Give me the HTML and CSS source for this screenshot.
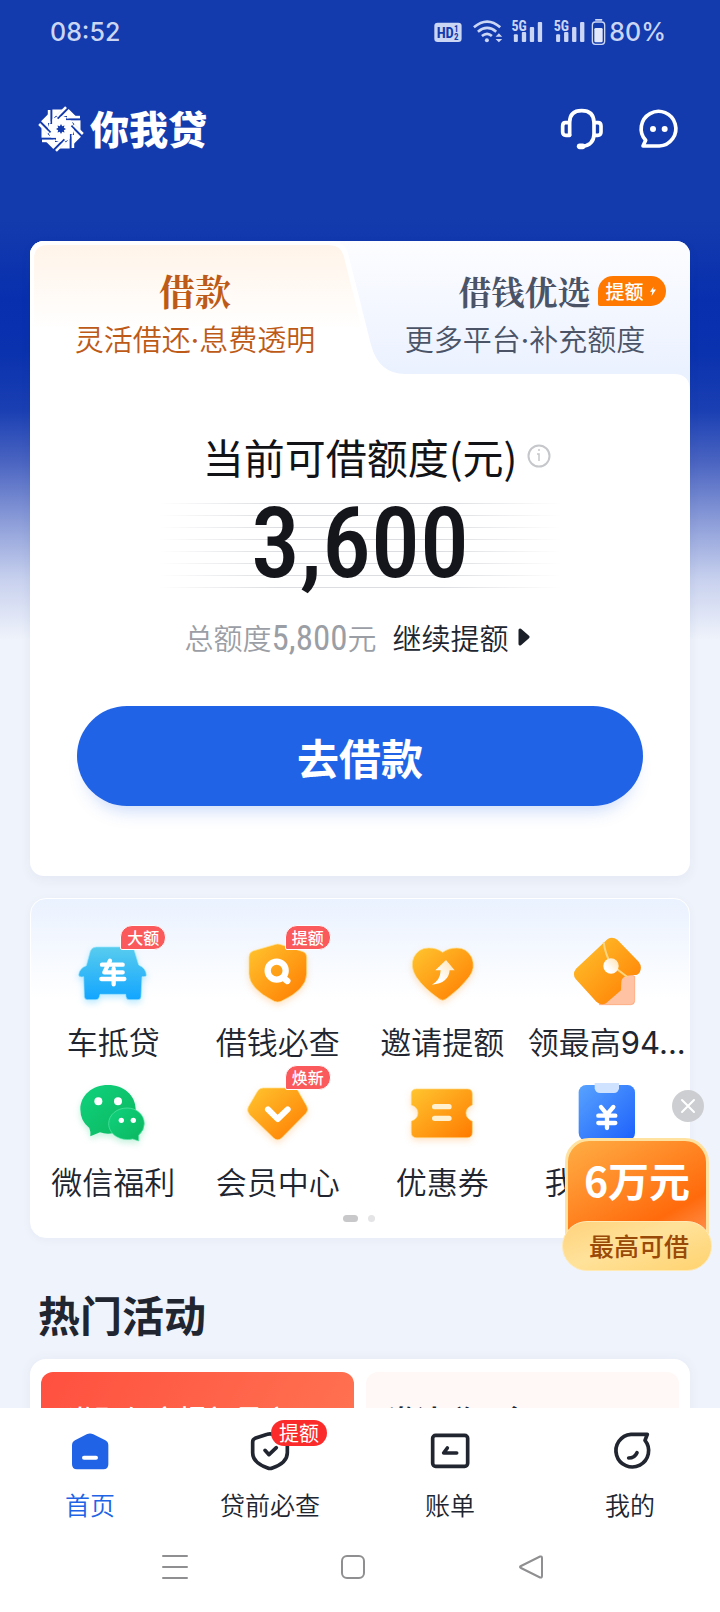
FILE: index.html
```html
<!DOCTYPE html>
<html lang="zh-CN">
<head>
<meta charset="utf-8">
<meta name="viewport" content="width=device-width, initial-scale=1">
<title>你我贷</title>
<link rel="stylesheet" href="styles.css">
</head>
<body>
<div class="app">
  <main class="content">
    <div class="status">
      <span>08:52</span>
      <span class="status-right">
        <svg class="status-icons" viewBox="228 54 517 84" aria-hidden="true">
          <rect x="229" y="68" width="82" height="58" rx="10" fill="#cbd6f5"/>
          <g font-family="Roboto Condensed, Roboto, sans-serif" font-weight="700" fill="#143bad">
            <text x="236" y="113" font-size="44">HD</text>
            <text x="288" y="95" font-size="27">1</text>
            <text x="288" y="121" font-size="27">2</text>
          </g>
          <g fill="none" stroke="#cbd6f5" stroke-width="8">
            <path d="M348 82Q388 48 427 82M360 95Q388 72 415 95M372 108Q388 95 402 108"/>
          </g>
          <circle cx="387" cy="121" r="6" fill="#cbd6f5"/>
          <path d="M413 110l10-10 10 10zM413 117l10 10 10-10z" fill="#cbd6f5"/>
          <g id="signal" fill="#cbd6f5">
            <rect x="468" y="103" width="12" height="23" rx="3"/>
            <rect x="492" y="96" width="13" height="30" rx="3"/>
            <rect x="516" y="81" width="13" height="45" rx="3"/>
            <rect x="540" y="66" width="13" height="60" rx="3"/>
            <text x="461" y="92" font-size="42" font-family="Roboto Condensed, Roboto, sans-serif" font-weight="700">5G</text>
          </g>
          <use href="#signal" x="127"/>
          <rect x="704" y="66" width="37" height="67" rx="9" fill="none" stroke="#cbd6f5" stroke-width="4"/>
          <rect x="712" y="57" width="22" height="5" rx="2" fill="#cbd6f5"/>
          <rect x="710" y="84" width="25" height="43" rx="4" fill="#e3e9fa"/>
        </svg>
        <span>80%</span>
      </span>
    </div>

    <header class="header">
      <div class="brand">
        <svg class="brand-mark" viewBox="-23 -23 46 46" aria-hidden="true">
          <defs>
            <path id="arm" d="M-8.700-19.500H1.200L-7-11.300V-5H-8.700Z" fill="#fff"/>
            <g id="bar" fill="none">
              <path d="M-9.800-21V-5" stroke="#143bad" stroke-width="1.800"/>
              <path d="M-11.900-19V-6" stroke="#fff" stroke-width="2.600"/>
            </g>
          </defs>
          <circle r="13" fill="#fff"/>
          <use href="#arm"/>
          <use href="#arm" transform="rotate(45)"/>
          <use href="#arm" transform="rotate(90)"/>
          <use href="#arm" transform="rotate(135)"/>
          <use href="#arm" transform="rotate(180)"/>
          <use href="#arm" transform="rotate(225)"/>
          <use href="#arm" transform="rotate(270)"/>
          <use href="#arm" transform="rotate(315)"/>
          <use href="#bar"/>
          <use href="#bar" transform="rotate(45)"/>
          <use href="#bar" transform="rotate(90)"/>
          <use href="#bar" transform="rotate(135)"/>
          <use href="#bar" transform="rotate(180)"/>
          <use href="#bar" transform="rotate(225)"/>
          <use href="#bar" transform="rotate(270)"/>
          <use href="#bar" transform="rotate(315)"/>
          <path d="M0-5l1.200 2.200 2.300-.700-.700 2.300L5 0 2.800 1.200l.700 2.300-2.300-.700L0 5-1.200 2.800l-2.300.700.700-2.300L-5 0l2.200-1.200-.700-2.300 2.300.700Z" fill="#143bad"/>
        </svg>
        <h1 class="brand-name">你我贷</h1>
      </div>
      <div class="header-actions">
        <button class="icon-button" aria-label="客服">
          <svg viewBox="594 315 144 144" fill="none" stroke="#fff" stroke-width="11" stroke-linecap="round" stroke-linejoin="round">
            <path d="M629 405V367Q629 332 665 332T702 367V403Q702 436 664 440"/>
            <path d="M628 368H616Q608 368 608 378V396Q608 406 618 406H629M703 368H714Q723 368 723 378V396Q723 406 713 406H703"/>
            <path d="M659 439H668" stroke-width="17"/>
          </svg>
        </button>
        <button class="icon-button" aria-label="消息">
          <svg viewBox="825 315 144 144" fill="none" stroke="#fff" stroke-width="11" stroke-linecap="round" stroke-linejoin="round">
            <path d="M849 438 857 421A52 52 0 1 1 898 438Z"/>
            <g fill="#fff" stroke="none"><circle cx="879" cy="387" r="9"/><circle cx="914" cy="387" r="9"/></g>
          </svg>
        </button>
      </div>
    </header>

    <section class="loan-card">
      <div class="tabs">
        <svg class="tabs-shape" viewBox="0 0 660 150" preserveAspectRatio="none" aria-hidden="true">
          <defs>
            <linearGradient id="warm" x1="0" y1="0" x2="0" y2="1"><stop offset="0" stop-color="#fff4e9"/><stop offset=".8" stop-color="#fff"/></linearGradient>
            <linearGradient id="cool" x1="0" y1="0" x2="0" y2="1"><stop offset="0" stop-color="#fdfdff"/><stop offset=".9" stop-color="#eaf1ff"/></linearGradient>
          </defs>
          <rect width="660" height="150" fill="url(#cool)"/>
          <path d="M0 0H302Q314 0 318 12L341 104Q349 133 375 133H644Q660 133 660 150H0Z" fill="#fff"/>
          <path d="M4 18Q4 4 18 4H299Q311 4 314 16L334 96V110H4Z" fill="url(#warm)"/>
        </svg>
        <button class="tab tab-active">
          <span class="tab-title tab-title-large">借款</span>
          <span class="tab-sub">灵活借还<span class="latin">·</span>息费透明</span>
        </button>
        <button class="tab tab-next">
          <span class="tab-title tab-title-row">借钱优选
            <span class="tab-tag">提额
              <svg viewBox="0 0 8 14" aria-hidden="true"><path d="M5 1 0 8h3L2 14 8 5H4z" fill="#fff"/></svg>
            </span>
          </span>
          <span class="tab-sub">更多平台<span class="latin">·</span>补充额度</span>
        </button>
      </div>

      <div class="quota">
        <div class="quota-head">
          <h2 class="quota-title">当前可借额度(元)</h2>
          <button class="info" aria-label="说明">
            <svg viewBox="0 0 24 24" fill="none" stroke="#c6c7ca" stroke-width="2"><circle cx="12" cy="12" r="10.500"/><path d="M10 10h2v7M11 6h2" stroke-width="1.500"/></svg>
          </button>
        </div>
        <div class="amount">3,600</div>
        <div class="total">
          <span class="total-value">总额度<span class="total-number">5,800</span>元</span>
          <a class="raise" href="#">继续提额
            <svg viewBox="0 0 12 18" aria-hidden="true"><path d="M2 2 10 9 2 16Z" fill="#1b2028" stroke="#1b2028" stroke-width="3" stroke-linejoin="round"/></svg>
          </a>
        </div>
        <button class="borrow">去借款</button>
      </div>
    </section>

    <section class="services">
      <svg class="defs" aria-hidden="true">
        <defs>
          <linearGradient id="orange" x1="0" y1="0" x2="1" y2="1"><stop offset="0" stop-color="#ffc52f"/><stop offset="1" stop-color="#ff7a00"/></linearGradient>
          <linearGradient id="sky" x1="0" y1="0" x2="0" y2="1"><stop offset="0" stop-color="#58ccee"/><stop offset="1" stop-color="#12a5ff"/></linearGradient>
          <linearGradient id="green" x1="0" y1="0" x2="1" y2="1"><stop offset="0" stop-color="#10d27c"/><stop offset="1" stop-color="#0bb65f"/></linearGradient>
          <linearGradient id="blue" x1="0" y1="0" x2="1" y2="1"><stop offset="0" stop-color="#58a3ff"/><stop offset="1" stop-color="#1c60fb"/></linearGradient>
          <linearGradient id="cream" x1="0" y1="1" x2="1" y2="0"><stop offset="0.300" stop-color="#fff"/><stop offset="1" stop-color="#ffe2b0"/></linearGradient>
        </defs>
      </svg>
      <ul class="service-grid">
        <li><a class="service" href="#">
          <svg class="service-icon glow-blue" viewBox="171 174 216 216" aria-hidden="true">
            <path d="M229 204H326Q338 204 343 215L356 258Q379 268 379 289 379 294 366 293L363 354Q362 362 354 362H327Q319 362 318 353L317 346H240L238 354Q236 362 228 362H202Q194 362 193 353L191 293Q176 296 176 287 178 268 199 260L211 216Q216 204 229 204Z" fill="url(#sky)" stroke="#9fe6ff" stroke-width="2"/>
            <path d="M246 257H308M270 245 253 280H308M244 300H313M281 269V316" fill="none" stroke="#fff" stroke-width="13" stroke-linecap="round" stroke-linejoin="round"/>
          </svg>
          <span class="badge">大额</span>
          <span class="service-name">车抵贷</span>
        </a></li>
        <li><a class="service" href="#">
          <svg class="service-icon glow-orange" viewBox="665 174 216 216" aria-hidden="true">
            <path d="M763 197Q772 193 782 197L848 218Q859 222 859 234V285Q858 332 782 367 772 371 762 367 687 329 686 285V234Q686 221 698 216Z" fill="url(#orange)" stroke="#ffe08a" stroke-width="2"/>
            <circle cx="769" cy="275" r="27" fill="none" stroke="#fff" stroke-width="19"/><path d="M790 297 801 306" stroke="#fff" stroke-width="19" stroke-linecap="round"/>
          </svg>
          <span class="badge">提额</span>
          <span class="service-name">借钱必查</span>
        </a></li>
        <li><a class="service" href="#">
          <svg class="service-icon glow-orange" viewBox="140 174 216 216" aria-hidden="true">
            <path d="M250 220Q267 207 293 207 322 207 337 235 350 267 329 294 303 329 261 359 250 368 239 359 194 328 171 294 151 262 164 234 178 207 208 207 233 207 250 220Z" fill="url(#orange)" stroke="#ffdf8a" stroke-width="2"/>
            <path d="M260 243 286 274H271Q268 313 218 317 243 304 244 274H228Z" fill="url(#cream)"/>
          </svg>
          <span class="service-name">邀请提额</span>
        </a></li>
        <li><a class="service" href="#">
          <svg class="service-icon" viewBox="635 174 216 216" aria-hidden="true">
            <path d="M785 300Q806 278 826 292V365Q826 377 814 377H720Z" fill="#ffc2a3" stroke="#ff9b65" stroke-width="2"/>
            <path d="M745 180Q759 171 774 182L838 248Q849 262 842 278 837 290 820 288L804 290Q787 292 786 310L785 334 740 373Q725 380 711 368L649 300Q638 285 650 269Z" fill="url(#orange)"/>
            <path d="M733 190Q737 222 755 257L804 294" fill="none" stroke="#ffd580" stroke-width="6"/>
            <circle cx="755" cy="261" r="23" fill="url(#cream)"/>
          </svg>
          <span class="service-name">领最高<span class="latin">94...</span></span>
        </a></li>
        <li><a class="service" href="#">
          <svg class="service-icon glow-green" viewBox="171 588 216 216" aria-hidden="true">
            <path d="M264 612C311 612 347 643 347 685S311 758 264 758Q251 758 240 754L211 766Q213 753 208 741 181 720 181 685C181 643 217 612 264 612Z" fill="url(#green)"/>
            <path d="M321 681C350 681 373 701 373 728Q373 747 356 763L356 780 338 774C298 782 266 758 266 728 266 701 291 681 321 681Z" fill="url(#green)" stroke="#5be7a7" stroke-width="2"/>
            <g fill="#fff"><circle cx="235" cy="661" r="12"/><circle cx="294" cy="661" r="12"/><circle cx="304" cy="718" r="8"/><circle cx="340" cy="718" r="8"/></g>
          </svg>
          <span class="service-name">微信福利</span>
        </a></li>
        <li><a class="service" href="#">
          <svg class="service-icon glow-orange" viewBox="665 588 216 216" aria-hidden="true">
            <path d="M729 621H817Q826 621 832 628L859 675Q866 687 857 697L784 771Q772 782 760 771L688 701Q678 690 684 678L712 630Q718 621 729 621Z" fill="url(#orange)" stroke="#ffe08a" stroke-width="2"/>
            <path d="M743 685 772 714 802 685" fill="none" stroke="#fff" stroke-width="18" stroke-linecap="round" stroke-linejoin="round"/>
          </svg>
          <span class="badge">焕新</span>
          <span class="service-name">会员中心</span>
        </a></li>
        <li><a class="service" href="#">
          <svg class="service-icon glow-orange" viewBox="140 588 216 216" aria-hidden="true">
            <path d="M172 624H324Q339 624 339 639V672Q320 680 320 696T339 721V754Q339 770 324 770H172Q156 770 156 754V721Q176 713 176 696T156 672V639Q156 624 172 624Z" fill="url(#orange)" stroke="#ffd67a" stroke-width="2"/>
            <path d="M226 677H269M226 712H269" stroke="#fff0d0" stroke-width="16" stroke-linecap="round"/>
          </svg>
          <span class="service-name">优惠券</span>
        </a></li>
        <li><a class="service" href="#">
          <svg class="service-icon" viewBox="635 588 216 216" aria-hidden="true">
            <rect x="658" y="612" width="169" height="166" rx="22" fill="url(#blue)"/>
            <path d="M706 606H779V622Q777 636 764 636H722Q708 636 706 622Z" fill="#cfe2ff"/>
            <path d="M725 678 743 700 762 678M717 704H768M717 726H768M743 700V741" fill="none" stroke="#fff" stroke-width="13" stroke-linecap="round"/>
          </svg>
          <span class="service-name">我的借款</span>
        </a></li>
      </ul>
      <div class="dots"><i class="dot dot-on"></i><i class="dot"></i></div>
    </section>

    <h2 class="section-title">热门活动</h2>
    <section class="promos">
      <a class="promo promo-red" href="#">邀职保享提额最高</a>
      <a class="promo promo-light" href="#">邀请赚现金</a>
    </section>

    <aside class="float">
      <button class="float-close" aria-label="关闭">
        <svg viewBox="0 0 32 32" stroke="#fff" stroke-width="2" stroke-linecap="round"><path d="M10 10 22 22M22 10 10 22"/></svg>
      </button>
      <a class="float-offer" href="#">
        <span class="float-amount">6万元</span>
        <span class="float-label">最高可借</span>
      </a>
    </aside>
  </main>

  <nav class="tabbar">
    <a class="tabbar-item tabbar-active" href="#">
      <svg viewBox="198 441 144 144" aria-hidden="true">
        <path d="M260 463Q270 458 280 463L316 481Q325 486 325 496V553Q325 568 310 568H231Q216 568 216 553V496Q216 486 225 481Z" fill="#2163e6"/>
        <path d="M252 533H288" stroke="#fff" stroke-width="12" stroke-linecap="round"/>
      </svg>
      <span>首页</span>
    </a>
    <a class="tabbar-item" href="#">
      <svg viewBox="738 441 144 144" fill="none" stroke="#20252f" stroke-width="11" stroke-linecap="round" stroke-linejoin="round" aria-hidden="true">
        <path d="M802 463Q810 460 818 463L855 475Q862 478 862 486V518Q862 548 817 564 810 567 803 564 758 548 758 518V486Q758 478 765 475Z"/>
        <path d="M795 511 807 524 829 503"/>
      </svg>
      <span class="tabbar-badge">提额</span>
      <span>贷前必查</span>
    </a>
    <a class="tabbar-item" href="#">
      <svg viewBox="198 441 144 144" fill="none" stroke="#20252f" stroke-width="11" stroke-linecap="round" stroke-linejoin="round" aria-hidden="true">
        <rect x="218" y="466" width="105" height="93" rx="9"/>
        <path d="M290 519H251L262 504"/>
      </svg>
      <span>账单</span>
    </a>
    <a class="tabbar-item" href="#">
      <svg viewBox="738 441 144 144" fill="none" stroke="#20252f" stroke-width="11" stroke-linecap="round" stroke-linejoin="round" aria-hidden="true">
        <path d="M813 463H862L855 481A49 49 0 1 1 813 463Z"/>
        <path d="M806 534Q824 534 831 518"/>
      </svg>
      <span>我的</span>
    </a>
  </nav>

  <div class="system">
    <button class="system-button" aria-label="菜单"><svg viewBox="0 0 26 26"><path d="M1 2H25M1 13H25M1 24H25"/></svg></button>
    <button class="system-button" aria-label="主屏"><svg viewBox="0 0 26 26"><rect x="2" y="2" width="22" height="22" rx="5"/></svg></button>
    <button class="system-button" aria-label="返回"><svg viewBox="0 0 26 26"><path d="M22 2.500Q24 2 24 4V22Q24 24 22 23.500L3 14Q1 13 3 12Z"/></svg></button>
  </div>
</div>
</body>
</html>
```
FILE: styles.css
```css
* { box-sizing: border-box; }

body {
  margin: 0;
  font-family: "Noto Sans CJK SC", sans-serif;
  font-weight: 350;
  color: #20252f;
}

h1, h2, ul { margin: 0; padding: 0; }
ul { list-style: none; }
a { color: inherit; text-decoration: none; }
button { border: 0; padding: 0; background: none; color: inherit; font: inherit; cursor: pointer; }
svg { display: block; }
.latin { font-family: Inter, sans-serif; font-weight: 400; }

.app { height: 100vh; display: flex; flex-direction: column; background: #fff; }

.content {
  position: relative;
  flex: 1;
  min-height: 0;
  overflow: hidden;
  padding: 0 30px;
  background: linear-gradient(#143bad 0, #143bad 220px, #082fae 300px, #0a31ae 350px, #1a3fb3 410px, #4a64c1 462px, #8a9bd8 520px, #c8d1ee 580px, #eff3fb 640px);
}

.status {
  height: 64px;
  margin: 0 24px 0 20px;
  display: flex;
  align-items: center;
  justify-content: space-between;
  color: #cbd6f5;
  font-family: Inter, sans-serif;
  font-size: 25px;
  font-weight: 500;
}
.status-right { display: flex; align-items: center; gap: 3px; }
.status-icons { width: 172px; height: 28px; }

.header {
  height: 130px;
  padding: 0 7px 0 8px;
  display: flex;
  align-items: center;
  justify-content: space-between;
}
.brand { display: flex; align-items: center; gap: 6px; }
.brand-mark { width: 46px; height: 46px; }
.brand-name { padding-bottom: 4px; color: #fff; font-size: 39px; font-weight: 900; font-style: oblique 8deg; line-height: 46px; }
.header-actions { display: flex; gap: 29px; }
.icon-button { width: 48px; height: 48px; }

.loan-card {
  margin-top: 47px;
  border-radius: 14px;
  overflow: hidden;
  background: #fff;
  box-shadow: 0 4px 12px rgba(40, 60, 120, .06);
}

.tabs { position: relative; display: grid; grid-template-columns: 1fr 1fr; height: 150px; }
.tabs-shape { position: absolute; inset: 0; width: 100%; height: 100%; }
.tab { position: relative; display: flex; flex-direction: column; align-items: center; padding-top: 28px; }
.tab-active { color: #bd5a17; }
.tab-next { color: #4b5467; }
.tab-title {
  font-family: "Noto Serif CJK SC", "Noto Sans CJK SC", serif;
  font-size: 33px;
  font-weight: 700;
  line-height: 44px;
}
.tab-title-large { font-size: 36px; }
.tab-title-row { display: flex; align-items: center; gap: 8px; margin-left: 74px; }
.tab-sub { font-size: 29px; line-height: 50px; }
.tab-tag {
  display: flex;
  align-items: center;
  gap: 6px;
  height: 30px;
  padding: 0 10px 0 7px;
  border-radius: 15px 15px 15px 2px;
  background: #ff7800;
  color: #fff;
  font-family: "Noto Sans CJK SC", sans-serif;
  font-size: 19px;
  font-weight: 500;
}
.tab-tag svg { width: 6px; height: 12px; }

.quota { padding: 37px 47px 70px; text-align: center; }
.quota-head { display: grid; grid-template-columns: 1fr auto 1fr; align-items: center; column-gap: 10px; }
.quota-title { grid-column: 2; color: #121316; font-size: 41px; font-weight: 400; line-height: 56px; }
.info { width: 24px; height: 24px; }
.amount {
  width: 404px;
  max-width: 100%;
  height: 85px;
  margin: 19px auto 0;
  background-image: linear-gradient(90deg, #fff, transparent 30%, transparent 70%, #fff), repeating-linear-gradient(#dcdde0 0 1px, transparent 1px 12px);
  color: #15161c;
  font-family: "Roboto Condensed", "Liberation Sans Narrow", Roboto, sans-serif;
  font-size: 98px;
  font-weight: 500;
  line-height: 82px;
}
.total { display: flex; align-items: center; justify-content: center; gap: 16px; margin: 24px 6px 0 0; line-height: 50px; font-size: 29px; }
.total-value { color: #9b9ea5; }
.total-number { font-family: "Roboto Condensed", "Liberation Sans Narrow", Roboto, sans-serif; font-size: 35px; font-weight: 400; line-height: 40px; }
.raise { display: flex; align-items: center; gap: 9px; }
.raise svg { width: 12px; height: 18px; }
.borrow {
  display: block;
  width: 100%;
  height: 100px;
  margin-top: 44px;
  border-radius: 50px;
  background: #2163e6;
  box-shadow: 0 14px 18px -10px rgba(33, 99, 230, .25);
  color: #fff;
  font-size: 42px;
  font-weight: 700;
}

.services {
  margin-top: 22px;
  padding: 38px 0 15px;
  border: 1px solid #fff;
  border-radius: 16px;
  background: linear-gradient(#eaf2ff, #fff 100px);
  box-shadow: 0 2px 10px rgba(40, 60, 120, .04);
}
.defs { position: absolute; width: 0; height: 0; }
.service-grid { display: grid; grid-template-columns: repeat(4, minmax(0, 1fr)); }
.service { position: relative; display: flex; flex-direction: column; align-items: center; gap: 12px; padding-bottom: 14px; }
.service-icon { width: 72px; height: 72px; }
.glow-blue { filter: drop-shadow(0 3px 3px rgba(40, 190, 255, .3)); }
.glow-orange { filter: drop-shadow(0 3px 3px rgba(255, 150, 40, .25)); }
.glow-green { filter: drop-shadow(0 3px 3px rgba(20, 200, 120, .25)); }
.service-name { font-size: 31px; line-height: 40px; white-space: nowrap; }
.badge {
  position: absolute;
  top: -12px;
  left: calc(50% + 7px);
  padding: 0 6px;
  border: 1px solid #fff;
  border-radius: 12px 12px 12px 2px;
  background: #fa5a5c;
  color: #fff;
  font-size: 16px;
  font-weight: 500;
  line-height: 23px;
}
.dots { display: flex; justify-content: center; gap: 10px; padding-right: 2px; }
.dot { width: 7px; height: 7px; border-radius: 4px; background: #e4e4e6; }
.dot-on { width: 15px; background: #c8c8ca; }

.section-title { margin: 45px 8px 14px; font-size: 42px; font-weight: 700; line-height: 62px; }
.promos {
  display: grid;
  grid-template-columns: 1fr 1fr;
  gap: 12px;
  padding: 13px 11px;
  border-radius: 16px;
  background: #fff;
  box-shadow: 0 0 12px rgba(90, 80, 140, .06);
}
.promo { height: 160px; padding: 27px 26px; border-radius: 12px; font-size: 28px; line-height: 40px; white-space: nowrap; }
.promo-red { background: linear-gradient(120deg, #ff503f, #ff7854); color: #fff; font-weight: 500; }
.promo-light { padding-left: 22px; background: #fff8f6; font-weight: 700; }

.float { position: absolute; right: 8px; bottom: 137px; width: 150px; display: flex; flex-direction: column; gap: 16px; }
.float-close { align-self: flex-end; width: 32px; height: 32px; margin-right: 8px; border-radius: 50%; background: rgba(200, 201, 204, .9); }
.float-offer { display: flex; flex-direction: column; align-items: center; }
.float-amount {
  width: 144px;
  height: 100px;
  margin-bottom: -17px;
  padding-top: 11px;
  border: 3px solid #ffe2a0;
  border-radius: 24px 24px 0 0;
  background: linear-gradient(150deg, #ffae45, #ff6a0c 75%, #ff9150);
  color: #fff;
  font-size: 41px;
  font-weight: 700;
  line-height: 54px;
  text-align: center;
}
.float-label {
  width: 100%;
  padding: 0 0 2px 4px;
  border: 1px solid #ffe9b4;
  border-radius: 25px;
  background: linear-gradient(160deg, #ffd27c, #ffe29a 45%, #ffd26e);
  color: #9a4a08;
  font-size: 25px;
  font-weight: 500;
  line-height: 46px;
  text-align: center;
}

.tabbar {
  position: relative;
  display: grid;
  grid-template-columns: repeat(4, 1fr);
  padding-top: 19px;
  background: #fff;
}
.tabbar-item { position: relative; display: flex; flex-direction: column; align-items: center; gap: 12px; padding-bottom: 1px; font-size: 25px; line-height: 34px; }
.tabbar-item svg { width: 48px; height: 48px; }
.tabbar-active { color: #2163e6; }
.tabbar-badge {
  position: absolute;
  top: -7px;
  left: calc(50% + 1px);
  padding: 0 8px;
  border-radius: 13px;
  background: #fc2b2b;
  color: #fff;
  font-size: 20px;
  font-weight: 400;
  line-height: 26px;
}

.system { display: flex; justify-content: center; gap: 152px; height: 90px; padding-right: 14px; background: #fff; }
.system-button { width: 26px; }
.system-button svg { fill: none; stroke: #8f8f91; stroke-width: 2; stroke-linecap: round; }
```
